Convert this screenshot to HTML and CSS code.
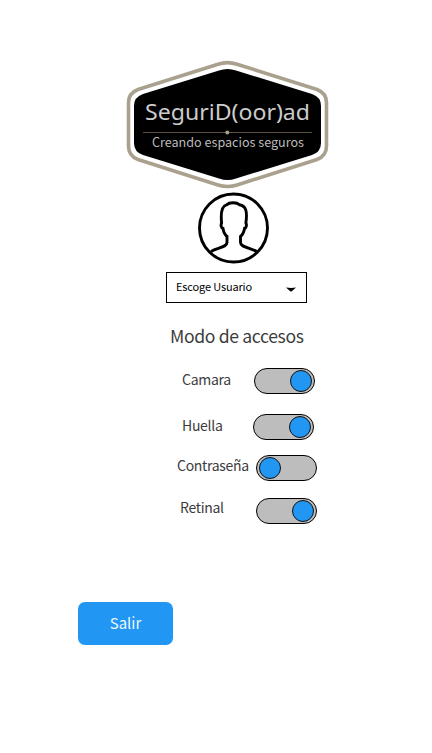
FILE: index.html
```html
<!DOCTYPE html>
<html lang="es">
<head>
<meta charset="utf-8">
<title>SeguriD(oor)ad</title>
<link rel="stylesheet" href="styles.css">
</head>
<body>
<main class="screen">
  <svg class="logo" viewBox="120 55 215 135" role="img" aria-label="SeguriD(oor)ad">
    <path class="logo-frame" d="M218 64.2 Q227.500 61 237 64.200 L317 89.500 Q326.500 93 326.500 103 V146 Q326.500 156 317 159.500 L237 185 Q227.500 188 218 185 L138 159.500 Q128.500 156 128.500 146 V103 Q128.500 93 138 89.500 Z"/>
    <path class="logo-fill" d="M219 70.500 Q227.500 67.500 236 70.500 L312 94 Q321 97 321 106 V143 Q321 152 312 155 L236 178.500 Q227.500 181.500 219 178.500 L143 155 Q134 152 134 143 V106 Q134 97 143 94 Z"/>
    <text class="logo-name" x="145" y="120.300" textLength="165" lengthAdjust="spacingAndGlyphs">SeguriD(oor)ad</text>
    <path class="logo-rule" d="M143 132.500 H312"/>
    <circle class="logo-dot" cx="227.300" cy="132.500" r="2"/>
    <text class="logo-tag" x="152" y="147" textLength="152" lengthAdjust="spacingAndGlyphs">Creando espacios seguros</text>
  </svg>
  <svg class="avatar" viewBox="198 192 71 72" aria-hidden="true">
    <circle cx="233.500" cy="228" r="34"/>
    <path d="M211 251.500 C217 247.500 227 247.500 227 242.500 V236.500 C224.500 234.500 223.500 231.500 223 228.500 C221.300 228 220.500 225 221.600 223 C220.500 212 221.500 206 226.500 204.800 C229.500 202.200 236.500 202 239.500 204.800 C246 206 247.500 211 245.900 223 C247 225 246.200 228 244.500 228.500 C244 231.500 243 234.500 240.500 236.500 V242.500 C240.500 247.500 250.500 247.500 256.500 251.500"/>
  </svg>
  <button class="select" type="button">
    <span>Escoge Usuario</span>
    <svg class="caret" viewBox="0 0 10 5"><path d="M0 .5 Q5 1.300 10 .5 L5.500 4.600 H4.500 Z"/></svg>
  </button>
  <h1 class="title">Modo de accesos</h1>
  <div class="row camera"><span class="label">Camara</span><span class="toggle on"></span></div>
  <div class="row finger"><span class="label">Huella</span><span class="toggle on"></span></div>
  <div class="row password"><span class="label">Contraseña</span><span class="toggle"></span></div>
  <div class="row retinal"><span class="label">Retinal</span><span class="toggle on"></span></div>
  <button class="exit" type="button">Salir</button>
</main>
</body>
</html>
```

FILE: styles.css
```css
*, *::before { box-sizing: border-box; }
body {
  margin: 0;
  background: #fff;
  color: #3c3c3c;
  font-family: "Noto Sans CJK SC", "Noto Sans", sans-serif;
}
.screen {
  display: flex;
  flex-direction: column;
  align-items: flex-start;
  width: 432px;
  height: 753px;
  padding-top: 55px;
}
.logo { width: 215px; height: 135px; margin-left: 120px; flex: none; }
.logo-frame { fill: #fff; stroke: #aaa08e; stroke-width: 3.6; }
.logo-fill { fill: #000; }
.logo-name { fill: #ccc; font: 21.500px "Noto Sans", sans-serif; }
.logo-tag { fill: #bbb; font: 12.500px "Noto Sans CJK SC", sans-serif; }
.logo-rule { stroke: #574e3c; stroke-width: 1; }
.logo-dot { fill: #aaa08e; }
.avatar {
  width: 71px;
  height: 72px;
  margin: 2px 0 0 198px;
  flex: none;
  fill: none;
  stroke: #000;
  stroke-width: 2.900;
}
.select {
  display: flex;
  align-items: center;
  justify-content: space-between;
  width: 141px;
  height: 31px;
  margin: 8px 0 0 166px;
  padding: 0 10px 0 9px;
  border: 1px solid #000;
  background: #fff;
  color: #000;
  font: 11px/16px "Noto Sans CJK SC", sans-serif;
  letter-spacing: -.15px;
}
.select span { margin-top: -3px; }
.caret { width: 10px; height: 5px; margin-top: 4px; }
.title {
  height: 26px;
  margin: 20px 0 0 170px;
  font-size: 17.600px;
  font-weight: 400;
  line-height: 26px;
  letter-spacing: -.35px;
  white-space: nowrap;
}
.row { display: flex; height: 26px; flex: none; }
.label { font-size: 14px; line-height: 22px; letter-spacing: -.3px; white-space: nowrap; }
.camera { margin: 19px 0 0 182px; }
.camera .label { width: 72px; }
.finger { margin: 20px 0 0 182px; }
.finger .label { width: 71px; }
.password { margin: 15px 0 0 177px; }
.password .label { width: 79px; line-height: 20px; }
.retinal { margin: 17px 0 0 180px; }
.retinal .label { width: 76px; line-height: 18px; }
.toggle {
  display: flex;
  align-items: center;
  width: 61px;
  height: 26px;
  padding: 0 2px;
  border: 1px solid #000;
  border-radius: 13px;
  background: #bdbdbd;
}
.toggle::before {
  content: "";
  width: 22px;
  height: 22px;
  border: 1px solid #111;
  border-radius: 50%;
  background: #2196f3;
}
.toggle.on { justify-content: flex-end; }
.exit {
  width: 95px;
  height: 43px;
  margin: 78px 0 0 78px;
  padding: 0 0 2px;
  border: 0;
  border-radius: 7px;
  background: #2196f3;
  color: #edf6fe;
  font: 15px/22px "Noto Sans CJK SC", sans-serif;
}
```
